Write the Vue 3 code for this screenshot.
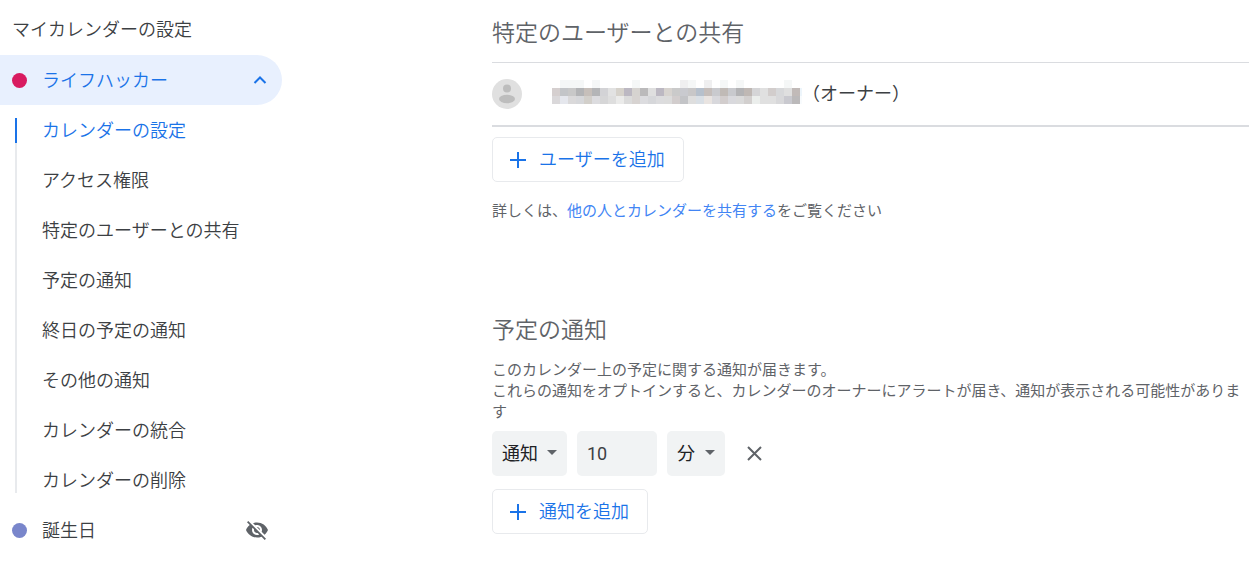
<script setup>
import { ref } from 'vue'

const links = [
  'カレンダーの設定',
  'アクセス権限',
  '特定のユーザーとの共有',
  '予定の通知',
  '終日の予定の通知',
  'その他の通知',
  'カレンダーの統合',
  'カレンダーの削除',
]
const active = ref(0)
const amount = ref('10')

const mosaicRows = [
  '- f5f7f7 f5f7f7 f5f7f7 - f5f7f7 - - - - f5f7f7 - - - - - efeff0 f5f7f7 - efeff0 - f5f7f7 - f5f7f7 - - - - - f5f7f7 -',
  'd5cfcf c3c5c8 c8c8c8 b3b4b6 c6bfba b4b5b7 d3d3d6 e2e2e2 d6d2cb bcb8c2 d6d3d0 bbbabb dfdfdf bcb8c2 d7d3cf cacaca c9cacf c8c7c8 b6c0cc c5bebb c9cace c0bab6 c8c9cd b3b3b5 bfb8b4 d5d5d7 e0e0e0 d2cdcc d7d8da dfdfdf c1bab8 edf5fb',
  'dad8da e5e7ed dad9da d6d7da d2cfca dcdcdf d6d6d7 dedede ebebea dbdbdb d7d3d1 dcdcdf d6d7da dcdcde dcdcdc d2cdcd c3c4c7 dedede d9dfe5 e9e4e1 d8d8dc d2cdcd d9d9dd dadada d2cfce ebeeec e0e0e0 e0e0e0 d8d8da c9c9cf bbb9ba f8fbfd',
]
const cells = mosaicRows.flatMap((row, y) =>
  row
    .split(' ')
    .map((color, x) => ({ x: x * 8, y: y * 8, color }))
    .filter((cell) => cell.color !== '-')
)
</script>

<template>
  <div class="page">
    <nav class="sidebar" aria-label="マイカレンダーの設定">
      <h1 class="side-title">マイカレンダーの設定</h1>
      <button class="calendar selected" type="button" aria-expanded="true">
        <span class="dot pink"></span>
        <span class="name">ライフハッカー</span>
        <svg class="chevron" width="14" height="10" viewBox="0 0 14 10" aria-hidden="true">
          <path d="M1.5 8 7 2.5 12.5 8" fill="none" stroke="#1a73e8" stroke-width="2" />
        </svg>
      </button>
      <ul class="sub">
        <li v-for="(link, i) in links" :key="link">
          <a href="#" :class="{ active: i === active }" @click.prevent="active = i">{{ link }}</a>
        </li>
      </ul>
      <button class="calendar" type="button">
        <span class="dot blue"></span>
        <span class="name">誕生日</span>
        <svg class="eye" width="24" height="24" viewBox="0 0 24 24" aria-hidden="true">
          <path fill="#5f6368" d="M12 7c2.76 0 5 2.24 5 5 0 .65-.13 1.26-.36 1.83l2.92 2.92c1.51-1.26 2.7-2.89 3.43-4.75-1.73-4.39-6-7.5-11-7.5-1.4 0-2.74.25-3.98.7l2.16 2.16C10.74 7.13 11.35 7 12 7zM2 4.27l2.28 2.28.46.46C3.08 8.3 1.78 10.02 1 12c1.73 4.39 6 7.5 11 7.5 1.55 0 3.03-.3 4.38-.84l.42.42L19.73 22 21 20.73 3.27 3 2 4.27zM7.53 9.8l1.55 1.55c-.05.21-.08.43-.08.65 0 1.66 1.34 3 3 3 .22 0 .44-.03.65-.08l1.55 1.55c-.67.33-1.41.53-2.2.53-2.76 0-5-2.24-5-5 0-.79.2-1.53.53-2.2zm4.31-.78 3.15 3.15.02-.16c0-1.66-1.34-3-3-3l-.17.01z" />
        </svg>
      </button>
    </nav>

    <main class="main">
      <section>
        <h2>特定のユーザーとの共有</h2>
        <div class="person">
          <svg class="avatar" width="30" height="30" viewBox="0 0 30 30" aria-hidden="true">
            <circle cx="15" cy="15" r="15" fill="#e0e0e0" />
            <circle cx="15" cy="9.5" r="4" fill="#bdbdbd" />
            <ellipse cx="15" cy="20" rx="8" ry="4.2" fill="#bdbdbd" />
          </svg>
          <svg class="mosaic" width="250" height="24" viewBox="0 0 250 24" shape-rendering="crispEdges" aria-hidden="true">
            <rect v-for="cell in cells" :key="cell.x + '-' + cell.y" :x="cell.x" :y="cell.y" width="8" height="8" :fill="'#' + cell.color" />
          </svg>
          <span class="owner">（オーナー）</span>
        </div>
        <button class="add" type="button">
          <svg width="16" height="16" viewBox="0 0 16 16" aria-hidden="true">
            <path d="M8 0v16M0 8h16" stroke="#1a73e8" stroke-width="2" />
          </svg>
          <span class="label">ユーザーを追加</span>
        </button>
        <p class="more">詳しくは、<a href="#">他の人とカレンダーを共有する</a>をご覧ください</p>
      </section>

      <section class="notify">
        <h2>予定の通知</h2>
        <p class="desc">このカレンダー上の予定に関する通知が届きます。<br />これらの通知をオプトインすると、カレンダーのオーナーにアラートが届き、通知が表示される可能性があります</p>
        <div class="controls">
          <div class="picker">
            <select class="kind" aria-label="通知方法">
              <option>通知</option>
            </select>
            <svg width="10" height="5" viewBox="0 0 10 5" aria-hidden="true"><path d="M0 0h10L5 5z" fill="#5f6368" /></svg>
          </div>
          <input v-model="amount" class="amount" type="text" inputmode="numeric" aria-label="時間" />
          <div class="picker">
            <select class="unit" aria-label="単位">
              <option>分</option>
            </select>
            <svg width="10" height="5" viewBox="0 0 10 5" aria-hidden="true"><path d="M0 0h10L5 5z" fill="#5f6368" /></svg>
          </div>
          <button class="remove" type="button" aria-label="通知を削除">
            <svg width="15" height="15" viewBox="0 0 15 15" aria-hidden="true">
              <path d="M1 1l13 13M14 1 1 14" stroke="#5f6368" stroke-width="2" />
            </svg>
          </button>
        </div>
        <button class="add" type="button">
          <svg width="16" height="16" viewBox="0 0 16 16" aria-hidden="true">
            <path d="M8 0v16M0 8h16" stroke="#1a73e8" stroke-width="2" />
          </svg>
          <span class="label">通知を追加</span>
        </button>
      </section>
    </main>
  </div>
</template>

<style>
body {
  margin: 0;
  background: #fff;
}
</style>

<style scoped>
.page {
  display: flex;
  gap: 210px;
  color: #3c4043;
  font-family: Roboto, "Noto Sans CJK JP", sans-serif;
  font-size: 15px;
}
button,
input,
select {
  box-sizing: border-box;
  margin: 0;
  border: 0;
  font: inherit;
  color: inherit;
}
button {
  cursor: pointer;
}
h1,
h2,
p,
ul {
  margin: 0;
  padding: 0;
  font-weight: 350;
}
.sidebar {
  flex: none;
  width: 282px;
  padding-top: 5px;
  font-size: 18px;
  font-weight: 350;
}
.side-title {
  padding-left: 12px;
  font-size: 18px;
  line-height: 50px;
}
.calendar {
  display: flex;
  align-items: center;
  width: 100%;
  height: 50px;
  padding: 0 13px 0 12px;
  background: none;
  text-align: left;
}
.selected {
  padding-right: 15px;
  border-radius: 0 25px 25px 0;
  background: #e8f0fe;
  color: #1a73e8;
}
.dot {
  width: 15px;
  height: 15px;
  margin-right: 15px;
  border-radius: 50%;
}
.pink {
  background: #d81b60;
}
.blue {
  background: #7986cb;
}
.name {
  flex: 1;
  padding-bottom: 2px;
}
.sub {
  display: grid;
  gap: 25px;
  margin: 13px 0 12px 15px;
  list-style: none;
  box-shadow: inset 2px 0 #e8eaed;
}
.sub a {
  display: block;
  padding-left: 27px;
  line-height: 25px;
  color: inherit;
  text-decoration: none;
}
.sub .active {
  color: #1a73e8;
  box-shadow: inset 2px 0 #1a73e8;
}
.main {
  flex: 1;
  min-width: 0;
  padding-top: 17px;
}
h2 {
  margin-bottom: 11px;
  color: #5f6368;
  font-size: 23px;
  line-height: 34px;
}
.person {
  display: flex;
  align-items: center;
  height: 62px;
  border-top: 1px solid #dadce0;
  border-bottom: 2px solid #dadce0;
}
.avatar {
  margin-right: 30px;
}
.mosaic,
.owner {
  margin-bottom: 4px;
}
.owner {
  font-size: 18px;
}
.add {
  display: flex;
  align-items: center;
  gap: 13px;
  height: 45px;
  margin-top: 10px;
  padding: 0 18px 0 17px;
  border: 1px solid #e8eaed;
  border-radius: 5px;
  background: #fff;
  color: #1a73e8;
  font-size: 18px;
  font-weight: 350;
}
.label {
  padding-bottom: 3px;
}
.more,
.desc {
  color: #5f6368;
  font-weight: 400;
  line-height: 21px;
}
.more {
  margin-top: 19px;
}
.more a {
  color: #4285f4;
  text-decoration: none;
}
.notify {
  margin-top: 92px;
}
.desc {
  padding-top: 1px;
}
.controls {
  display: flex;
  gap: 10px;
  margin-top: 8px;
  color: #202124;
  font-size: 18px;
}
.picker {
  position: relative;
}
.picker svg {
  position: absolute;
  top: 19px;
  right: 10px;
  pointer-events: none;
}
.picker select,
.amount {
  height: 45px;
  padding: 0 10px;
  border-radius: 5px;
  background: #f1f3f4;
}
.picker select {
  appearance: none;
}
.kind {
  width: 75px;
}
.unit {
  width: 58px;
}
.amount {
  width: 80px;
  color: #3c4043;
}
.remove {
  display: flex;
  align-items: center;
  padding: 0 12px;
  background: none;
}
.notify .add {
  margin-top: 13px;
}
</style>
